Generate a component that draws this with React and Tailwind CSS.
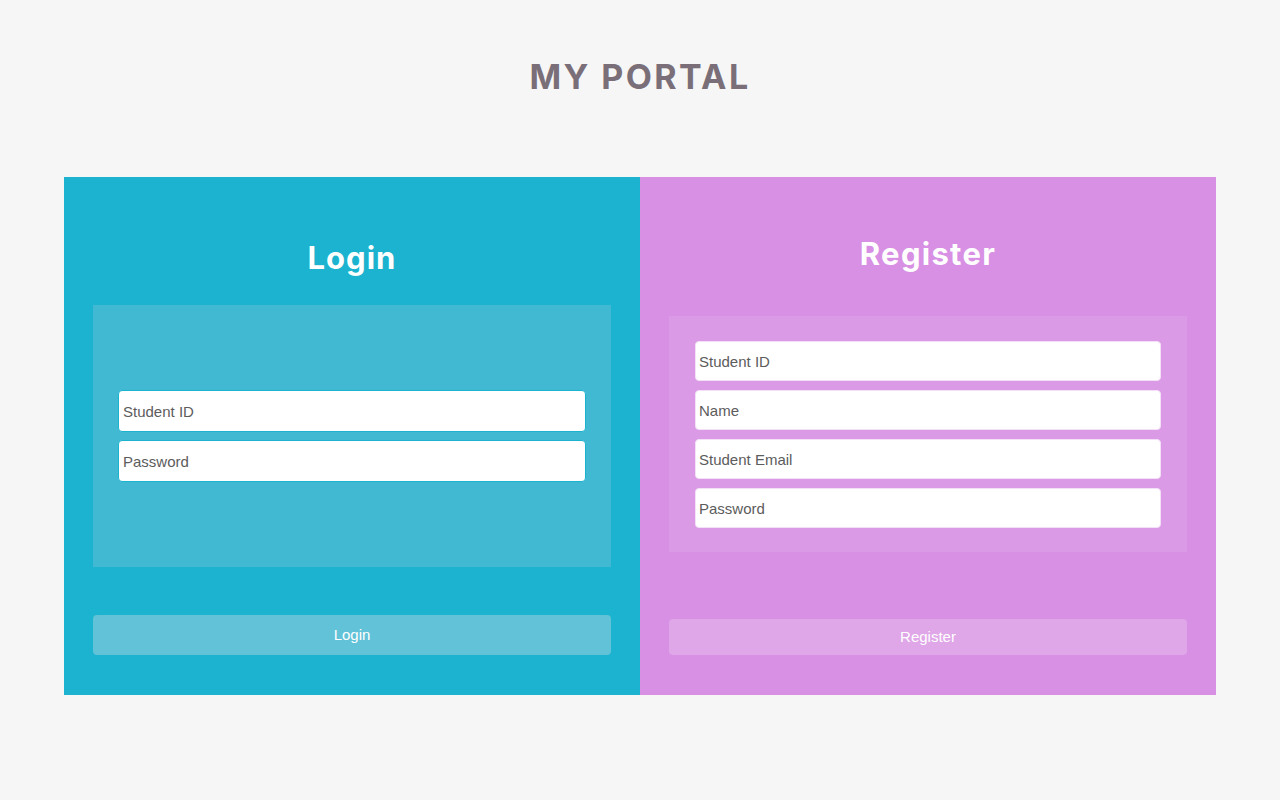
import React from 'react'

const inputBase =
  'w-full rounded-[4px] bg-white text-[15px] text-[#333] placeholder:text-[#5c5c5c] outline-none font-["Liberation_Sans",Arial,sans-serif]'

const App = () => {
  return (
    <div className="min-h-[800px] w-full bg-[#f6f6f6] font-['Inter',sans-serif]">
      {/* Title */}
      <div className="flex h-[177px] justify-center pt-[56px]">
        <h1 className="h-[42px] text-[34px] font-bold leading-[42px] tracking-[2.4px] text-[#7a6f78]">
          MY PORTAL
        </h1>
      </div>

      <div className="mx-[64px] grid h-[518px] grid-cols-2">
        {/* Login */}
        <div className="flex flex-col bg-[#1bb3cf] px-[29px]">
          <h2 className="mt-[61px] mb-[27px] h-[40px] text-center text-[31px] font-bold leading-[40px] tracking-[1px] text-white">
            Login
          </h2>
          <div className="flex h-[262px] flex-col justify-center gap-[8px] bg-[#42b9d3] px-[25px]">
            <input className={`${inputBase} h-[42px] border border-[#1bb3cf] px-[4px]`} placeholder="Student ID" />
            <input className={`${inputBase} h-[42px] border border-[#1bb3cf] px-[4px]`} placeholder="Password" type="password" />
          </div>
          <button className="mt-[48px] h-[40px] w-full rounded-[4px] bg-[#62c2d8] text-[15px] text-white font-['Liberation_Sans',Arial,sans-serif]">
            Login
          </button>
        </div>

        {/* Register */}
        <div className="flex flex-col bg-[#d790e3] px-[29px]">
          <h2 className="mt-[57px] mb-[42px] h-[40px] text-center text-[31px] font-bold leading-[40px] tracking-[1.3px] text-white">
            Register
          </h2>
          <div className="flex h-[236px] flex-col gap-[9px] bg-[#db9ae6] px-[26px] pt-[25px]">
            <input className={`${inputBase} h-[40px] border border-[#f3e0f6] px-[3px]`} placeholder="Student ID" />
            <input className={`${inputBase} h-[40px] border border-[#f3e0f6] px-[3px]`} placeholder="Name" />
            <input className={`${inputBase} h-[40px] border border-[#f3e0f6] px-[3px]`} placeholder="Student Email" />
            <input className={`${inputBase} h-[40px] border border-[#f3e0f6] px-[3px]`} placeholder="Password" type="password" />
          </div>
          <button className="mt-[67px] h-[36px] w-full rounded-[4px] bg-[#dfa6e8] text-[15px] text-white font-['Liberation_Sans',Arial,sans-serif]">
            Register
          </button>
        </div>
      </div>
    </div>
  )
}

export default App
